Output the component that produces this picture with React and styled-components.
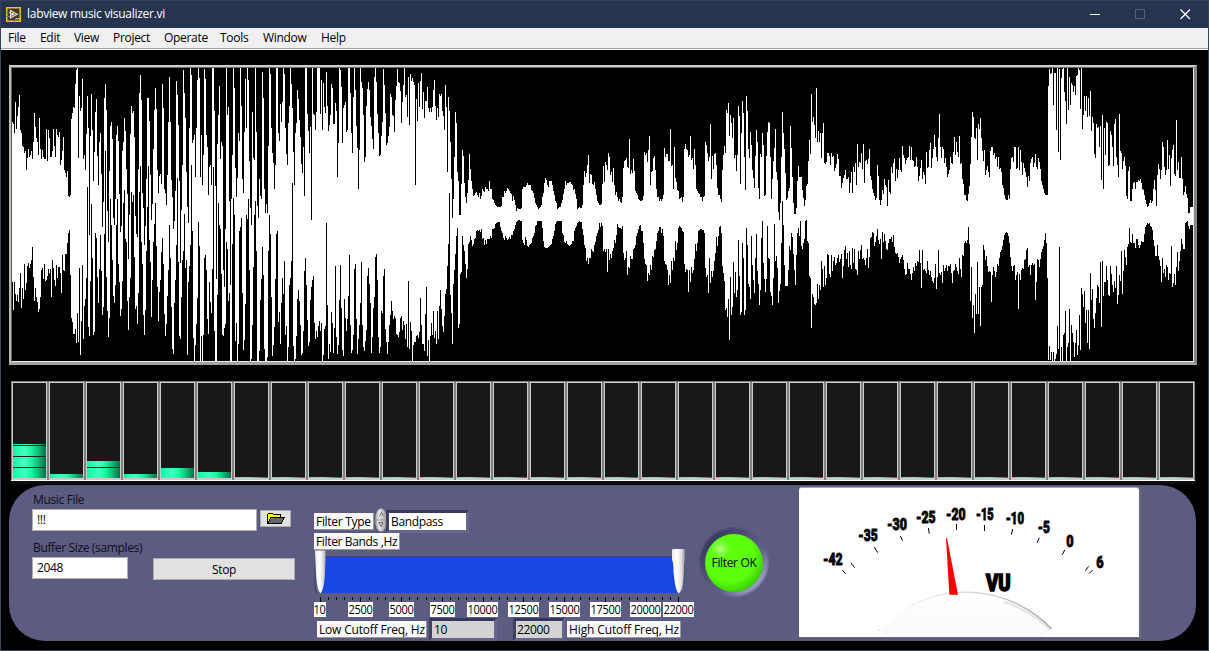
import React from "react";
import styled, { createGlobalStyle } from "styled-components";

const GlobalStyle = createGlobalStyle`
  * { box-sizing: border-box; }
  body { margin: 0; background: #000; overflow: hidden; }
  svg { display: block; }
`;

const UI_FONT = '"Open Sans", "Noto Sans", sans-serif';

/* Waveform envelopes: [originX, originY, samples]; samples are in thirds of a pixel. */
const TOP = [
  [0, 0, "36,366 40,372 43,398 46,306 49,388 52,348 55,322 58,285 61,390 64,398 67,437 70,440 73,458 76,452 79,510 82,475 85,447 88,470 91,465 94,452 97,478 100,425 103,339 106,380 109,415 112,425 115,464 118,354 121,446 124,478 127,450 130,472 133,476 136,476 139,388 142,482 145,390 148,415 151,472 154,470 157,452 160,388 163,437 166,472 169,388 172,404 175,410 178,397 181,496 184,480 187,452 190,410 193,510 196,520 199,532 202,514 205,587 208,592 211,585 214,358 217,340 220,320 223,325 226,252 229,210 232,204"],
  [60, 62, "52,18 55,288 58,102 61,147 64,138 67,51 70,290 73,280 76,323 79,215 82,102 85,198 88,520 91,222 94,96 97,204 100,358 103,270 106,150 109,111 112,282 115,370 118,240 121,212 124,335 127,494 130,420 133,108 136,66 139,143 142,448 145,540 148,326 151,192 154,180 157,232 160,468 163,488 166,410 169,218 172,192 175,238 178,396 181,510 184,492 187,266 190,240 193,168 196,207 199,320 202,395 205,590 208,458 211,215 214,132 217,152 220,148 223,225 226,462 229,516 232,524 235,320 238,93 241,39 244,114 247,392 250,438 253,550 256,492 259,352 262,108 265,108 268,177 271,338 274,473 277,426 280,260 283,143 286,78 289,142 292,325 295,394 298,342 301,336 304,366 307,66 310,138 313,380 316,392 319,428 322,338 325,180 328,45 331,180 334,354 337,404 340,502 343,476 346,386 349,57 352,98 355,188 358,356 361,602 364,444 367,308 370,24 373,93 376,168 379,330 382,434 385,482 388,198"],
  [190, 62, "1,18 4,38 7,244 10,233 13,218 16,344 19,198 22,54 25,18 28,48 31,344 34,218 37,370 40,278 43,20 46,50 49,218 52,256 55,398 58,314 61,308 64,368 67,18 70,18 73,146 76,372 79,650 82,246 85,158 88,72 91,292 94,240 97,252 100,624 103,676 106,500 109,18 112,158 115,135 118,416 121,670 124,410 127,278 130,18 133,78 136,318 139,406 142,348 145,212 148,236 151,18 154,132 157,352 160,394 163,210 166,50 169,198 172,18 175,54 178,298 181,437 184,488 187,150 190,288 193,294 196,18 199,210 202,433 205,468 208,350 211,402 214,410 217,30 220,108 223,380 226,452 229,426 232,452 235,252 238,18 241,36 244,198 247,272 250,302 253,380 256,308 259,18 262,18 265,212 268,236 271,126 274,180 277,120 280,18 283,36 286,198 289,276 292,308 295,182 298,132 301,18 304,66 307,138 310,270 313,368 316,212 319,182 322,84 325,110 328,174 331,225 334,306 337,334 340,255 343,402 346,18 349,18 352,155 355,206 358,272"],
  [0, 0, "931,380 934,660 937,204 940,342 943,345 946,390 949,335 952,204 958,204 961,342 964,240 967,390 970,250 973,320 976,340 979,215 982,318 985,392 988,375 991,345 994,252 997,264 1000,372 1003,373 1006,308 1009,332 1012,530 1015,428 1018,204 1021,210 1024,260 1027,430 1030,325 1033,315 1036,306 1039,395 1042,390 1045,204 1048,204 1051,280 1054,400 1057,458 1060,290 1063,204 1066,270 1069,378 1072,445 1075,566 1078,450 1081,204 1084,246 1087,264 1090,345 1093,486 1096,472 1099,318 1102,268 1105,246 1108,270 1111,350 1114,378 1117,416 1120,446 1123,230 1126,204 1129,246 1132,342 1135,400 1138,468 1141,466 1144,408 1147,366 1150,207 1153,255 1156,338 1159,434 1162,428 1165,408 1168,380 1171,282 1174,290 1177,345 1180,348 1183,395 1186,300 1189,258 1192,207 1195,245 1198,248"],
  [400, 60, "1,94 4,190 7,125 10,75 13,25 16,110 19,105 22,170 25,52 28,194 31,42 34,64 37,54 40,66 43,76 46,374 49,118 52,182 55,70 58,140 61,64 64,40 67,146 70,96 73,174 76,122 79,122 82,80 85,145 88,155 91,145 94,155 97,142 100,90 103,60 106,138 109,180 112,145 115,170 118,102 121,108 124,102 127,152 130,168 133,210 136,75 139,140 142,335 145,112 148,152 151,246 154,356 157,474 160,416 163,290 166,156 169,190 172,336 175,362 178,464 181,464 184,372 187,270 190,288 193,370 196,412 199,428 202,400 205,360 208,282 211,326 214,364 217,388 220,408 223,404 226,400 229,396 232,404 235,410 238,400 241,418 244,408 247,386 250,394 253,396 256,380 259,386 262,386 265,394 268,364 271,388 274,388 277,416 280,420 283,430 286,434 292,442 298,442 304,438 307,412 310,410 313,392 316,400 319,392 322,384 325,386 328,392 331,398 334,402 337,422 340,408 343,420 346,434 349,452 352,444 358,448 364,444 367,388 370,380 376,380 379,374 382,368 385,376 391,374 394,390 397,392 400,400 403,414 406,430 409,434 412,442 415,446 421,442 424,436 427,412 430,400 433,370 436,354 439,360 442,376 445,380 448,364 454,364 457,376 460,394 463,406 466,422 469,428 472,448 478,442 481,442 484,430 487,420 490,402 493,388 496,364 499,374 502,368 511,366 514,372 517,374 520,390 523,388 526,402 529,418 532,448 538,442 544,444 547,436 550,374 553,334 556,352 559,340 562,314 565,285 568,370 571,342 574,346 577,372 580,374 583,366 586,388 589,404 592,422 595,430 598,434 604,432 607,372 610,318 613,366 616,306 619,314 622,330 625,280 628,292 631,346 634,336 637,366 640,324 643,376 646,404 649,396 652,410 655,424 658,418 661,426 664,428 667,410 670,324 673,304 676,300 679,294 682,320 685,324 688,237 691,342 694,330 697,338 700,296 703,334 706,392 709,400 712,404 715,418 718,420 721,424 727,420 730,408 733,276 736,284 739,280 742,306 745,270 748,228 751,374 754,336 757,334 760,294 763,288 766,330 769,386 772,410 775,412 778,422 781,418 784,422 787,416 790,406 793,264 796,292 799,282 802,282 805,302 808,302 811,207 814,318 817,314 820,386 823,262 826,354 829,366 832,390 835,394 838,416 841,414 844,412 847,426 850,412 853,268 856,252 859,266 862,270 865,292 868,286 871,228 874,300 877,294 880,326 883,266 886,314 889,386 892,392 895,400 898,402 901,410 904,412 907,422 910,410 913,408 916,246 919,256 922,278 925,302 928,290 931,192 934,356 937,288 940,326 943,282 946,278 949,316 952,384 955,404 958,406 961,418 964,426 967,330 970,286 973,258 976,278 979,150 982,160 985,129 988,228 991,166 994,188 997,234 1000,174 1003,294 1006,284 1009,334 1012,286 1015,138 1018,168 1021,372 1024,218 1027,123 1030,160 1033,290 1036,390 1039,108 1042,154 1045,268 1048,294 1051,216 1054,256 1057,330 1060,354 1063,384 1066,288 1069,210 1072,246 1075,384 1078,416 1081,282 1084,290 1087,220 1090,256 1093,408 1096,404 1099,288 1102,216 1105,186 1108,188 1111,290 1114,416 1117,358 1120,304 1123,264 1126,207 1129,336 1132,360 1135,456 1138,480 1141,428 1144,290 1147,156 1150,220 1153,268 1156,338 1159,420 1162,414 1165,392 1168,384 1171,198 1174,264 1177,350 1180,430 1183,462 1186,462 1189,444 1192,362 1195,318 1198,350"],
  [800, 50, "1,380 4,380 7,420 10,444 13,468 16,450 19,408 22,402 25,333 28,270 31,312 34,132 37,216 40,200 43,224 46,264 49,114 52,276 55,243 58,276 61,249 64,324 67,250 70,219 73,338 76,342 79,336 82,308 85,310 88,318 91,346 94,310 97,320 100,318 103,362 106,354 109,342 112,312 115,328 118,378 121,378 124,413 127,400 130,384 133,376 136,360 139,386 142,388 145,380 148,428 151,400 154,366 157,430 160,350 163,366 166,338 169,404 172,282 175,350 178,336 181,340 184,310 187,356 190,282 193,400 196,334 199,330 202,342 205,326 208,297 211,378 214,390 217,416 220,428 223,438 226,450 229,444 232,346 235,378 238,450 241,464 244,450 247,420 250,432 253,386 256,404 259,412 262,467 265,390 268,426 271,432 274,350 277,368 280,338 283,326 286,394 289,358 292,384 295,360 298,324 301,360 304,366 307,288 310,314 313,324 316,342 319,330 322,324 325,320 328,288 331,330 334,292 337,330 340,334 343,352 346,348 349,322 352,352 355,392 358,378 361,354 364,330 367,386 370,366 373,374 376,402 379,306 382,354 385,350 388,300 391,278 394,354 397,324 400,296 403,255 406,292 409,320 412,334 415,264 418,192 421,290 424,324 427,292 430,296 433,340 436,324 439,350 442,380 445,372 448,360 451,320 454,340 457,342 460,306 463,260 466,316 469,276 472,306 475,320 478,258 481,342 484,340 487,386 490,402 493,434 496,434 499,450 502,454 505,432 508,408 511,342 514,262 517,186 520,200 523,264 526,266 529,234 532,330 535,222 538,236 541,204 544,264 547,304 550,334 553,300 556,376 559,360 562,348 565,366 568,380 571,304 574,290 577,290 580,316 583,308 586,326 589,320 592,350 595,320 598,356 601,354 604,366 607,404 610,414 613,434 616,448 622,450 625,436 628,446 631,358 634,324 637,320 640,336 643,292 646,290 649,356 652,354 655,290 658,360 661,300 664,336 667,374 670,340 673,354 676,366 679,380 682,412 685,378 688,392 691,340 694,326 697,320 700,350 703,340 706,312 709,350 712,356 715,324 718,336 721,358 724,394 727,404 730,418 733,430 736,434 742,434 745,108 748,58 751,72 754,68 757,54 760,166 763,68 766,70 769,240 772,54 775,306 778,56 781,330 784,84 787,56 790,54 793,126 796,152 799,222 802,54 805,180 808,82 811,164 814,98 817,106 820,126 823,108 826,134 829,78 832,76 835,54 838,60 841,176 844,54 847,236 850,194 853,138 856,182 859,138 862,200 865,144 868,198 871,124 874,242 877,202 880,218 883,312 886,324 889,222 892,234 895,230 898,290 901,228 904,390 907,195 910,416 913,234 916,314 919,216 922,218 925,348 928,344 931,242 934,256 937,290 940,348 943,222 946,207 949,322 952,346 955,380 958,192 961,304 964,308 967,356 970,332 973,322 976,348 979,438 982,446 985,364 988,350 991,452 994,452 997,418 1000,400 1003,396 1006,416 1009,396 1012,396 1015,390 1018,394 1021,387 1024,400 1027,418 1030,420 1033,434 1036,450 1039,462 1042,470 1045,468 1048,460 1051,450 1054,458 1057,454 1060,418 1063,390 1066,420 1069,468 1072,376 1075,342 1078,358 1081,388 1084,360 1087,276 1090,292 1093,350 1096,374 1099,360 1102,270 1105,358 1108,316 1111,408 1114,324 1117,300 1120,285 1123,372 1126,378 1129,210 1132,360 1135,336 1138,384 1141,384 1144,321 1147,386 1150,434 1153,426 1156,408 1159,432 1162,444 1165,488 1168,490 1171,470 1177,472"],
];

const BOTTOM = [
  [0, 200, "36,246 40,330 43,246 46,282 49,303 52,286 55,306 58,264 61,220 64,324 67,264 70,296 73,192 76,270 79,250 82,198 85,190 88,204 91,192 94,180 97,142 100,230 103,302 106,264 109,290 112,306 115,336 118,328 121,290 124,210 127,204 130,237 133,192 136,242 139,240 142,228 145,207 148,219 151,207 154,290 157,180 160,204 163,240 166,258 169,195 172,234 175,200 178,202 181,219 184,278 187,165 190,210 193,213 196,162 199,162 202,128 205,100 208,90 211,225 214,354 217,366 220,402 223,402 226,388 229,430 232,340 235,426 238,204 241,465 244,363 247,195 250,416 253,318 256,297 259,234"],
  [60, 62, "82,375 85,794 88,822 91,656 94,426 97,588 100,818 103,810 106,514 109,528 112,644 115,722 118,620 121,518 124,626 127,758 130,736 133,516 136,266 139,644 142,747 145,825 148,768 151,410 154,488 157,594 160,702 163,722 166,668 169,488 172,410 175,606 178,660 181,762 184,740 187,656 190,422 193,384 196,530 199,540 202,717 205,804 208,704 211,648 214,390 217,420 220,398 223,584 226,740 229,732 232,786 235,692 238,390 241,312 244,540 247,606 250,758 253,818 256,744 259,566 262,434 265,312 268,534 271,600 274,764 277,654 280,540 283,486 286,422 289,552 292,674 295,776 298,690 301,654 304,570 307,528 310,606 313,756 316,822 319,786 322,702 325,624 328,489 331,588 334,735 337,860 340,876 343,722 346,654 349,548 352,348 355,600 358,822 361,830 364,704 367,594 370,566 373,456 376,618 379,594 382,878 385,660 388,612"],
  [190, 62, "1,548 4,308 7,506 10,828 13,896 16,850 19,786 22,708 25,480 28,552 31,896 34,822 37,896 40,820 43,588 46,578 49,624 52,772 55,816 58,660 61,720 64,752 67,620 70,316 73,806 76,896 79,896 82,698 85,422 88,488 91,500 94,636 97,818 100,822 103,798 106,786 109,540 112,560 115,716 118,692 121,896 124,896 127,546 130,408 133,458 136,836 139,784 142,896 145,846 148,506 151,494 154,468 157,692 160,864 163,834 166,726 169,460 172,472 175,410 178,624 181,896 184,892 187,790 190,614 193,458 196,418 199,566 202,896 205,896 208,866 211,714 214,650 217,556 220,640 223,860 226,896 229,896 232,884 235,566 238,458 241,516 244,704 247,882 250,850 253,794 256,650 259,516 262,506 265,780 268,750 271,846 274,722 277,648 280,696 283,598 286,818 289,792 292,896 295,856 298,668 301,648 304,598 307,363 310,852 313,896 316,890 319,822 322,710 325,684 328,716 331,790 334,880 337,872 340,806 343,626 346,588 349,668 352,774 355,852 358,840"],
  [0, 200, "931,300 934,262 937,240 940,228 943,368 946,416 949,394 952,410 955,378 958,363 961,392 964,370 967,483 970,465 973,386 976,378 979,68 982,315 985,476 988,432 991,456 994,336 997,368 1000,458 1003,384 1006,198 1009,410 1012,462 1015,436 1018,300 1021,195 1024,324 1027,450 1030,468 1033,298 1036,354 1039,392 1042,356 1045,288 1048,165 1051,374 1054,458 1057,450 1060,404 1063,207 1066,192 1069,356 1072,462 1075,416 1078,376 1081,310 1084,186 1087,374 1090,440 1093,452 1096,424 1099,390 1102,228 1105,204 1108,252 1111,310 1114,458 1117,410 1120,324 1123,290 1126,172 1129,162 1132,240 1135,410 1138,458 1141,440 1144,332 1147,340 1150,228 1153,207 1156,388 1159,426 1162,462 1165,426 1168,376 1171,346 1174,303 1177,334 1180,356 1183,348 1186,354 1189,402 1192,404 1195,410 1198,396"],
  [400, 60, "1,774 4,768 7,810 10,782 13,796 16,836 19,792 22,860 25,662 28,866 31,786 34,812 37,903 40,854 43,846 46,846 49,828 52,826 55,834 58,816 61,714 64,794 67,852 70,852 73,872 76,762 79,682 82,888 85,840 88,903 91,828 94,790 97,824 100,752 103,834 106,812 109,852 112,754 115,836 118,738 121,690 124,746 127,798 130,816 133,768 136,702 139,686 142,618 145,552 148,400 151,704 154,758 157,852 160,672 163,630 166,582 169,528 172,504 175,804 178,792 181,642 184,636 187,528 190,556 193,574 196,612 199,654 202,626 205,552 208,546 211,528 214,540 217,558 220,552 223,536 226,534 229,512 232,510 235,514 238,510 241,516 244,507 247,538 250,534 253,555 256,540 259,552 262,536 268,536 271,528 274,534 277,506 280,508 283,504 286,492 292,486 298,486 301,500 304,514 307,520 310,534 313,540 316,528 319,534 322,540 328,532 331,536 334,524 337,524 340,512 343,506 346,496 349,486 355,480 364,482 367,540 370,548 373,556 376,532 379,540 382,558 385,560 388,556 394,550 397,534 400,528 403,518 406,498 409,496 412,484 424,484 427,504 430,544 433,562 439,564 445,562 451,556 454,552 457,536 460,528 463,514 466,492 469,486 472,484 484,482 487,518 490,524 493,546 496,550 499,544 502,552 508,558 514,552 517,544 520,542 523,514 526,504 529,498 532,488 538,484 544,486 550,524 553,556 556,564 559,602 562,594 565,612 568,594 571,594 574,566 577,574 580,576 583,556 586,546 589,528 592,520 595,510 598,488 601,500 604,488 607,498 610,572 613,566 616,576 619,568 622,636 625,568 628,600 631,582 634,594 637,572 640,564 643,540 646,548 649,524 652,492 655,502 661,504 664,506 667,498 670,580 673,600 676,594 679,572 682,644 685,620 688,624 691,588 694,598 697,598 700,566 703,564 706,554 709,528 712,518 715,508 718,498 721,495 724,512 727,512 730,550 733,598 736,612 739,614 742,662 745,640 748,646 751,614 754,630 757,588 760,590 763,570 766,568 769,542 772,520 775,512 778,502 781,502 784,520 787,506 790,528 793,604 796,612 799,616 802,630 805,674 808,644 811,668 814,604 817,630 820,594 823,604 826,542 829,570 832,550 835,504 838,498 841,502 844,504 847,512 850,515 853,612 856,636 859,628 862,630 865,696 868,630 871,666 874,620 877,640 880,630 883,598 886,552 889,574 892,550 895,514 898,510 901,507 910,510 913,520 916,624 919,650 922,644 925,698 928,594 931,668 934,632 937,650 940,632 943,604 946,578 949,530 952,558 955,528 958,500 961,498 964,520 967,618 970,640 973,662 976,750 979,744 982,772 985,716 988,840 991,650 994,766 997,740 1000,606 1003,698 1006,636 1009,712 1012,690 1015,540 1018,648 1021,766 1024,756 1027,548 1030,594 1033,765 1036,750 1039,504 1042,554 1045,672 1048,682 1051,716 1054,528 1057,614 1060,660 1063,698 1066,594 1069,522 1072,632 1075,672 1078,734 1081,690 1084,534 1087,484 1090,608 1093,656 1096,696 1099,656 1102,498 1105,594 1108,598 1111,696 1114,708 1117,735 1120,654 1123,492 1126,602 1129,588 1132,624 1135,728 1138,692 1141,672 1144,548 1147,424 1150,494 1153,614 1156,678 1162,678 1165,630 1168,558 1171,570 1174,518 1177,532 1180,582 1183,630 1186,674 1189,584 1192,520 1195,504 1198,528"],
  [800, 50, "1,514 4,588 7,598 10,580 13,566 16,514 19,510 22,574 25,580 28,678 31,684 34,834 37,732 40,742 43,762 46,764 49,760 52,702 55,746 58,704 61,720 64,634 67,656 70,710 73,648 76,704 79,684 82,612 85,614 88,672 91,680 94,616 97,662 100,632 103,620 106,644 109,638 112,624 115,614 118,636 121,626 124,612 127,684 130,648 133,600 136,588 139,626 142,610 145,652 148,604 151,646 154,656 157,594 160,640 163,598 166,656 169,660 172,674 175,604 178,626 181,600 184,586 187,626 190,624 193,630 196,644 199,624 202,598 205,654 208,620 211,564 214,562 217,546 220,548 223,588 226,576 229,558 232,538 235,570 238,582 241,568 244,626 247,546 250,576 253,552 256,574 259,596 262,600 265,580 268,566 271,566 274,560 277,576 280,556 283,590 286,608 289,612 292,610 295,622 298,638 301,626 304,620 307,614 310,630 313,656 316,674 319,672 322,640 325,656 328,656 331,672 334,690 337,670 340,650 343,662 346,640 349,648 352,634 355,636 358,600 361,640 364,714 367,600 370,660 373,658 376,664 379,670 382,634 385,660 388,674 391,664 394,682 397,694 400,698 403,684 406,642 409,718 412,682 415,600 418,670 421,676 424,666 427,700 430,644 433,662 436,654 439,644 442,664 445,648 448,648 451,642 454,668 457,698 460,664 463,660 466,642 469,650 472,662 475,672 478,624 481,656 484,680 487,614 490,618 493,580 496,574 499,578 502,570 505,532 508,582 511,752 514,652 517,804 520,764 523,848 526,732 529,792 532,636 535,792 538,710 541,828 544,710 547,704 550,584 553,600 556,630 559,618 562,648 565,666 568,664 571,666 574,756 577,676 580,650 583,662 586,680 589,666 592,642 595,648 598,624 601,606 604,600 607,588 610,570 613,556 616,550 619,546 622,548 625,558 628,580 631,620 634,648 637,664 640,648 643,644 646,690 649,676 652,666 655,776 658,672 661,690 664,660 667,654 670,658 673,630 676,628 679,600 682,594 685,652 688,644 691,674 694,646 697,640 700,644 703,642 706,750 709,696 712,626 715,630 718,652 721,628 724,606 727,596 730,588 733,570 736,550 739,580 742,684 745,930 748,888 751,930 754,906 757,932 760,906 763,932 766,926 769,912 772,828 775,896 778,592 781,932 784,890 787,932 790,854 793,850 796,784 799,932 802,890 805,878 808,778 811,932 814,826 817,848 820,876 823,920 826,880 829,840 832,914 835,884 838,796 841,900 844,714 847,732 850,770 853,724 856,820 859,780 862,880 865,780 868,896 871,670 874,750 877,716 880,806 883,834 886,788 889,744 892,704 895,710 898,758 901,636 904,830 907,634 910,738 913,696 916,696 919,648 922,690 925,734 928,738 931,648 934,672 937,704 940,726 943,692 946,714 949,648 952,762 955,736 958,676 961,694 964,604 967,732 970,662 973,600 976,620 979,644 982,590 985,582 988,534 991,576 994,578 997,552 1000,580 1003,580 1006,594 1009,568 1012,568 1015,586 1018,594 1021,586 1024,572 1030,576 1033,552 1036,530 1039,524 1042,520 1045,522 1048,520 1051,528 1054,530 1057,540 1060,570 1063,588 1066,618 1069,618 1072,586 1075,618 1078,630 1081,648 1084,696 1087,624 1090,668 1093,658 1096,680 1099,646 1102,652 1105,690 1108,668 1111,672 1114,588 1117,710 1120,700 1123,672 1126,706 1129,650 1132,606 1135,662 1138,632 1141,604 1144,568 1147,582 1150,598 1153,596 1156,520 1159,516 1162,514 1165,528 1168,536 1171,524 1177,526"],
];

const PLOT = { x: 12, y: 68, w: 1181, h: 293 };

function expand(chunks) {
  const pts = [];
  chunks.forEach(([ox, oy, text]) =>
    text.split(" ").forEach((pair) => {
      const [cx, cy] = pair.split(",").map(Number);
      pts.push([ox + Math.floor(cx / 3), oy + Math.round(cy / 3)]);
    })
  );
  const out = [];
  for (let i = 0; i < pts.length; i += 1) {
    const [x, y] = pts[i];
    out[x] = y;
    const next = pts[i + 1];
    if (next) {
      for (let k = x + 1; k < next[0]; k += 1) {
        out[k] = Math.round(y + ((next[1] - y) * (k - x)) / (next[0] - x));
      }
    }
  }
  return out;
}

function wavePath() {
  const top = expand(TOP);
  const bottom = expand(BOTTOM);
  let d = "";
  for (let x = PLOT.x; x < PLOT.x + PLOT.w; x += 1) {
    const a = Math.max(0, top[x] - PLOT.y);
    const b = Math.min(PLOT.h, bottom[x] - PLOT.y);
    if (b > a) d += `M${x - PLOT.x} ${a}h1V${b}h-1z`;
  }
  return d;
}
const WAVE = wavePath();

const Window = styled.div`
  width: 1209px;
  height: 651px;
  display: flex;
  flex-direction: column;
  background: #000;
  border: 1px solid #35425c;
  font: 12px ${UI_FONT};
  letter-spacing: -0.35px;
  color: #000;
  white-space: nowrap;
`;

const TitleBar = styled.header`
  height: 27px;
  flex: none;
  display: flex;
  align-items: center;
  padding-left: 5px;
  background: #263450;
  color: #fff;
`;
const Title = styled.span`
  flex: 1;
  height: 27px;
  margin-left: 6px;
  line-height: 26px;
  letter-spacing: -0.28px;
`;
const WindowButton = styled.div`
  width: 45px;
  height: 27px;
  display: grid;
  place-items: center;
`;

const MenuBar = styled.nav`
  height: 22px;
  flex: none;
  display: grid;
  grid-template-columns: 32px 34px 39px 51px 56px 43px 58px 60px;
  padding-left: 7px;
  line-height: 19px;
  letter-spacing: -0.3px;
  background: #f0f0f0;
  border-bottom: 1px solid #fff;
  box-shadow: inset 0 -1px 0 #a3a6a3;
`;

const Body = styled.main`
  padding: 15px 0 0 8px;
`;

const PlotFrame = styled.section`
  width: 1188px;
  height: 300px;
  border-style: solid;
  border-width: 2px 3px 3px 2px;
  border-color: #cbcbcb #868686 #a3a3a3 #bdbdbd;
`;
const PlotArea = styled.div`
  height: 295px;
  border: 1px solid;
  border-color: #696969 #e6e6e6 #ededed #5c5c5c;
`;

const Spectrum = styled.section`
  width: 1184px;
  height: 100px;
  margin: 16px 0 0 2px;
  display: flex;
  gap: 2px;
  padding: 1px 1px 0;
  background: #808080;
  border-bottom: 1px solid #fff;
  box-shadow: 1px 3px 0 #0e0e0e;
`;
const Band = styled.div`
  width: 35px;
  height: 98px;
  display: flex;
  align-items: flex-end;
  background: #181818;
  border: 1px solid #cbcbcb;
  border-bottom-width: 2px;
`;
const Level = styled.div`
  width: 33px;
  height: ${(p) => p.$h}px;
  background: repeating-linear-gradient(0deg, transparent 0 10px, #06291d 10px 11px),
    linear-gradient(90deg, #17ecaa 0%, #22fcab 12%, #45ffc0 34%, #1cf6a0 55%, #13c983 72%, #087044 100%);
`;

const Panel = styled.section`
  width: 1187px;
  height: 156px;
  margin-top: 4px;
  display: flex;
  background: #5c5c82;
  border-radius: 36px;
`;

const FileColumn = styled.div`
  width: 263px;
  margin-left: 23px;
  padding-top: 5px;
`;
const Caption = styled.div`
  height: 19px;
  line-height: 20px;
  padding-left: 1px;
  color: #0d0d18;
`;
const Row = styled.div`
  display: flex;
  height: ${(p) => p.$h}px;
  margin: ${(p) => p.$m || "0"};
`;
const TextBox = styled.div`
  width: ${(p) => p.$w}px;
  height: 22px;
  padding-left: 4px;
  line-height: 19px;
  background: #fff;
  border: 1px solid #adadad;
`;
const Button = styled.div`
  width: ${(p) => p.$w}px;
  height: ${(p) => p.$h}px;
  margin: 1px 0 0 ${(p) => p.$gap}px;
  display: flex;
  align-items: center;
  justify-content: center;
  background: #e1e1e1;
  border: 1px solid #adadad;
`;

const FilterColumn = styled.div`
  width: 384px;
  margin-left: 19px;
  padding-top: 23px;
`;
const Tag = styled.div`
  width: ${(p) => p.$w}px;
  height: 17px;
  margin-top: ${(p) => p.$top || 0}px;
  margin-left: ${(p) => p.$left || 0}px;
  padding-left: 2px;
  line-height: 18px;
  letter-spacing: ${(p) => p.$track || -0.3}px;
  background: #f9f9f9;
  border: solid #99999c;
  border-width: 0 1px 1px 0;
`;
const Sunken = styled.div`
  width: ${(p) => p.$w}px;
  height: 23px;
  margin: ${(p) => p.$m};
  padding-left: ${(p) => p.$pad}px;
  line-height: 18px;
  background: ${(p) => p.$bg};
  border: 3px solid;
  border-color: #38385c #66668f #66668f #414168;
`;

const LedHolder = styled.div`
  width: 70px;
  height: 70px;
  margin: 42px 1px 0;
  display: grid;
  place-items: center;
  border-radius: 50%;
  background: linear-gradient(135deg, #34345a 12%, #4d4d74 36%, #62628a 62%, #a4a4cd 84%, #7777a0 92%);
  box-shadow: inset 0 0 3px 1px #5c5c82;
`;
const Led = styled.div`
  width: 58px;
  height: 58px;
  margin-top: 1px;
  display: grid;
  place-items: center;
  border-radius: 50%;
  background: radial-gradient(circle at 27% 26%, #b9ff83 0, #7aff3a 9%, transparent 18%),
    radial-gradient(circle at 42% 40%, #5cff0c 0 50%, #40d707 70%, #259d03 88%, #176f02 100%);
`;

const Meter = styled.div`
  width: 340px;
  height: 150px;
  margin: 2px 0 0 29px;
  background: #fff;
  border-top: 1px solid #a9a9ae;
  border-radius: 3px 3px 0 0;
  box-shadow: 2px 1px 2px #6b6b7c;
`;

function AppIcon() {
  return (
    <svg width="15" height="15" viewBox="0 0 15 15">
      <rect x="0.75" y="0.75" width="13.5" height="13.5" fill="#383a3c" stroke="#fdbd18" strokeWidth="1.5" />
      <path d="M0 5.5h4M0 9.5h4M11 7.5h4" stroke="#5580a5" />
      <path d="M4.5 3.5v7.5L11 7.3z" fill="#4c4631" stroke="#f5dfa0" strokeWidth="1.2" />
      <path d="M5.5 5.5v3.5L8.7 7.3z" fill="#fff" />
      <path d="M9.500 12.500l1-1.500 1 1.500 1-1.500 1 1.500" fill="none" stroke="#e7e7e7" strokeWidth="0.9" />
    </svg>
  );
}

function FolderIcon() {
  return (
    <svg width="18" height="13" viewBox="0 0 18 13" shapeRendering="crispEdges">
      <path d="M0.5 11V2.5L2 1h3l1.5 1.5h7V5" fill="#ff0" stroke="#000" />
      <path d="M0.5 11.5L4 5.5h13.5l-3.5 6z" fill="#666" stroke="#000" />
    </svg>
  );
}

function Spinner() {
  return (
    <svg width="13" height="24" viewBox="0 0 13 24">
      <defs>
        <linearGradient id="spin" x1="0" x2="1">
          <stop offset="0" stopColor="#9d9da0" />
          <stop offset="0.35" stopColor="#e9e9e9" />
          <stop offset="1" stopColor="#929295" />
        </linearGradient>
      </defs>
      <ellipse cx="6" cy="12" rx="6" ry="11.5" fill="url(#spin)" stroke="#85858a" strokeWidth="0.6" />
      <path d="M0.5 12h11" stroke="#a0a0a3" />
      <path d="M4.500 8.500l2-4 1.500 3M4 14.500h4l-2 4z" fill="none" stroke="#555" strokeWidth="0.8" />
    </svg>
  );
}

const HZ_LABELS = [10, 2500, 5000, 7500, 10000, 12500, 15000, 17500, 20000, 22000];
const hzToX = (hz) => 6.3 + ((hz - 10) / 21990) * 358.4;

function BandSlider() {
  const ticks = [10];
  for (let hz = 500; hz <= 22000; hz += 500) ticks.push(hz);
  return (
    <svg width="384" height="68" viewBox="0 0 384 68">
      <defs>
        <linearGradient id="thumb" x1="0" x2="1">
          <stop offset="0" stopColor="#ededed" />
          <stop offset="0.4" stopColor="#fff" />
          <stop offset="0.75" stopColor="#dcdcdc" />
          <stop offset="1" stopColor="#8b8b8b" />
        </linearGradient>
      </defs>
      <rect x="0.5" y="7" width="370" height="37.5" rx="5" fill="#454568" />
      <rect x="2" y="9" width="368" height="35.5" rx="5" fill="#686890" />
      <rect x="7" y="8" width="358" height="36" fill="#1947e3" />
      <path d="M1 1.5h11L11 25q-1 16-4.5 19.500Q3 41 2 25z" fill="url(#thumb)" />
      <path d="M358 1q0-1 2-1h9q2 0 2 1v10q-1 2-1 12-1 19-5.500 21.500Q361 41 359.500 23q0-10-1.500-12z" fill="url(#thumb)" />
      <g shapeRendering="crispEdges" fill="#000">
        {ticks.map((hz) => (
          <rect key={hz} x={Math.round(hzToX(hz) - 0.5)} y="48" width="1" height={HZ_LABELS.includes(hz) ? 5 : 3} />
        ))}
      </g>
      {HZ_LABELS.map((hz) => {
        const w = hz === 10 ? 13 : hz < 10000 ? 25 : 31;
        const x = Math.round(hzToX(hz) - w / 2 - 0.3);
        return (
          <g key={hz}>
            <rect x={x} y="53" width={w} height="15" fill="#fff" />
            <text x={x + 0.5} y="65" textLength={w - 1} lengthAdjust="spacingAndGlyphs" fontSize="12">
              {hz}
            </text>
          </g>
        );
      })}
    </svg>
  );
}

/* [text, left, right, baseline] in meter units (three per pixel) */
const METER_LABELS = [
  ["-42", 99, 158, 585],
  ["-35", 205, 263, 513],
  ["-30", 291, 351, 480],
  ["-25", 378, 437, 459],
  ["-20", 468, 527, 450],
  ["-15", 558, 611, 450],
  ["-10", 647, 702, 461],
  ["-5", 743, 780, 488],
  ["0", 829, 851, 531],
  ["6", 919, 941, 594],
];

function VuMeter() {
  return (
    <svg width="340" height="149" viewBox="27 354 1020 447" fontFamily='Roboto, "Liberation Sans", sans-serif' fontWeight="900" letterSpacing="0">
      <defs>
        <linearGradient id="rim" x1="0" x2="1">
          <stop offset="0" stopColor="#fff" />
          <stop offset="0.5" stopColor="#d5d5d5" />
          <stop offset="1" stopColor="#a2a2a2" />
        </linearGradient>
        <linearGradient id="hub" x1="0" y1="0" x2="0" y2="1">
          <stop offset="0" stopColor="#fff" />
          <stop offset="1" stopColor="#f9f9f9" />
        </linearGradient>
      </defs>
      <path d="M267 780A357 357 0 0 1 785 777L760 801H290z" fill="url(#hub)" />
      <path d="M300 748A357 357 0 0 1 785 777" fill="none" stroke="url(#rim)" strokeWidth="4" />
      <path d="M640 695A357 357 0 0 1 780 779" fill="none" stroke="#c4c4c4" strokeOpacity="0.4" strokeWidth="7" />
      <circle cx="267" cy="781" r="2" fill="#bbb" />
      <path
        d="M157 600l10 11M183 579l11 14M253 531l10 17M331 498l7 14M415 474l3 17M499.500 462v18M583.500 465v18M668 477l-4 17M748 503l-7 15M824 540l-7 14M896 589l-10 13M908 600l-11 11"
        stroke="#000"
        strokeWidth="3"
      />
      <path d="M468 504h3l33 170h-26z" fill="#f00" />
      {METER_LABELS.map(([t, l, r, y]) => (
        <text key={t} x={l} y={y} fontSize="50" textLength={r - l} lengthAdjust="spacingAndGlyphs" stroke="#000" strokeWidth="2.5">
          {t}
        </text>
      ))}
      <text x="588" y="662" fontSize="74" textLength="74" lengthAdjust="spacingAndGlyphs" stroke="#000" strokeWidth="5">
        VU
      </text>
    </svg>
  );
}

const MENUS = ["File", "Edit", "View", "Project", "Operate", "Tools", "Window", "Help"];
const LEVELS = [34, 4, 17, 4, 10, 6, ...Array(26).fill(1)];

export default function App() {
  return (
    <Window>
      <GlobalStyle />
      <TitleBar>
        <AppIcon />
        <Title>labview music visualizer.vi</Title>
        <WindowButton>
          <svg width="11" height="11"><path d="M0 5.500h10" stroke="#fff" /></svg>
        </WindowButton>
        <WindowButton>
          <svg width="11" height="11"><rect x="0.5" y="0.5" width="9" height="9" fill="none" stroke="#536079" /></svg>
        </WindowButton>
        <WindowButton>
          <svg width="11" height="11"><path d="M0.500 0.500l9.500 9.500M10 0.500L0.500 10" stroke="#fff" strokeWidth="1.2" /></svg>
        </WindowButton>
      </TitleBar>
      <MenuBar>
        {MENUS.map((m) => (
          <span key={m}>{m}</span>
        ))}
      </MenuBar>
      <Body>
        <PlotFrame>
          <PlotArea>
            <svg width={PLOT.w} height={PLOT.h} shapeRendering="crispEdges">
              <path d={WAVE} fill="#fff" />
            </svg>
          </PlotArea>
        </PlotFrame>
        <Spectrum>
          {LEVELS.map((h, i) => (
            <Band key={i}>
              <Level $h={h} />
            </Band>
          ))}
        </Spectrum>
        <Panel>
          <FileColumn>
            <Caption>Music File</Caption>
            <Row $h={22}>
              <TextBox $w={225}>!!!</TextBox>
              <Button $w={31} $h={17} $gap={3}>
                <FolderIcon />
              </Button>
            </Row>
            <Row $h={19} $m="7px 0 0">
              <Caption>Buffer Size (samples)</Caption>
            </Row>
            <Row $h={23}>
              <TextBox $w={96}>2048</TextBox>
              <Button $w={142} $h={22} $gap={25}>Stop</Button>
            </Row>
          </FileColumn>
          <FilterColumn>
            <Row $h={25}>
              <Tag $w={60} $top={5}>Filter Type</Tag>
              <Row $h={24} $m="0 0 0 1px">
                <Spinner />
              </Row>
              <Sunken $w={83} $bg="#fff" $pad={2} $m="2px 0 0 -2px">Bandpass</Sunken>
            </Row>
            <Tag $w={86} $track={-0.35}>Filter Bands ,Hz</Tag>
            <Row $h={68} $m="-1px 0 0">
              <BandSlider />
            </Row>
            <Row $h={23} $m="1px 0 0 3px">
              <Tag $w={110} $top={3} $track={-0.18}>Low Cutoff Freq, Hz</Tag>
              <Sunken $w={68} $bg="#d3d3d3" $pad={2} $m="0 0 0 2px">10</Sunken>
              <Sunken $w={52} $bg="#d3d3d3" $pad={1} $m="0 0 0 16px">22000</Sunken>
              <Tag $w={114} $top={3} $left={2} $track={-0.12}>High Cutoff Freq, Hz</Tag>
            </Row>
          </FilterColumn>
          <LedHolder>
            <Led>Filter OK</Led>
          </LedHolder>
          <Meter>
            <VuMeter />
          </Meter>
        </Panel>
      </Body>
    </Window>
  );
}
